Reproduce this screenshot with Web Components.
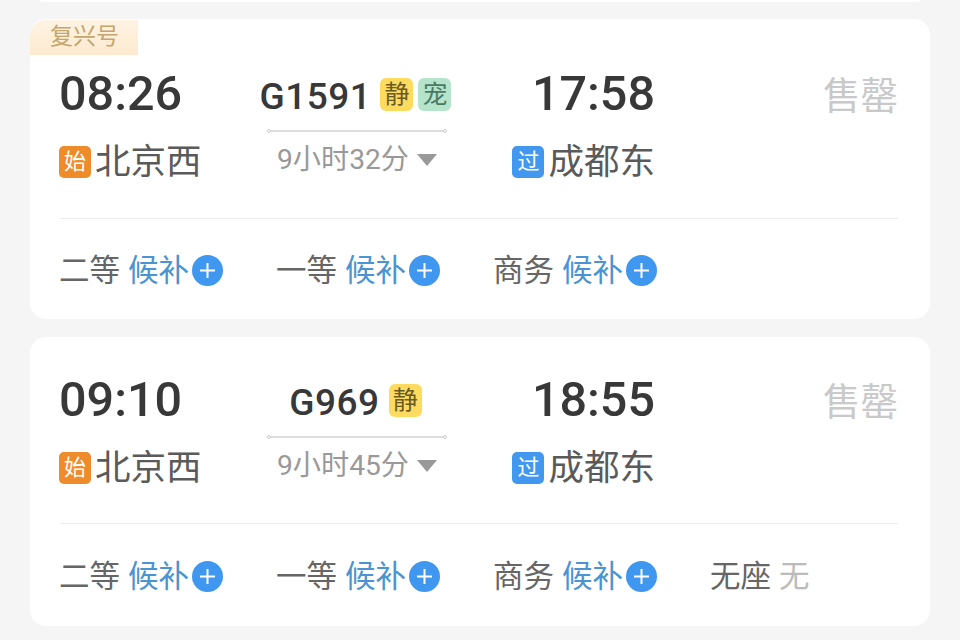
<!DOCTYPE html>
<html lang="zh">
<head>
<meta charset="utf-8">
<title>车次列表</title>
<style>
  html, body { margin: 0; height: 100%; }
  body {
    width: 960px;
    height: 640px;
    overflow: hidden;
    background: #f5f5f5;
    font-family: Roboto, "Noto Sans CJK SC", sans-serif;
  }
  train-list > * { flex: none; }
</style>
</head>
<body>
<train-list>
  <train-card tag="复兴号">
    <span slot="depart">08:26</span>
    <stop-name slot="from" kind="start">北京西</stop-name>
    <span slot="code">G1591</span>
    <train-flag slot="flags" kind="quiet">静</train-flag>
    <train-flag slot="flags" kind="pet">宠</train-flag>
    <span slot="duration">9小时32分</span>
    <span slot="arrive">17:58</span>
    <stop-name slot="to" kind="pass">成都东</stop-name>
    <span slot="status">售罄</span>
    <seat-item slot="seats" name="二等" wait>候补</seat-item>
    <seat-item slot="seats" name="一等" wait>候补</seat-item>
    <seat-item slot="seats" name="商务" wait>候补</seat-item>
  </train-card>
  <train-card>
    <span slot="depart">09:10</span>
    <stop-name slot="from" kind="start">北京西</stop-name>
    <span slot="code">G969</span>
    <train-flag slot="flags" kind="quiet">静</train-flag>
    <span slot="duration">9小时45分</span>
    <span slot="arrive">18:55</span>
    <stop-name slot="to" kind="pass">成都东</stop-name>
    <span slot="status">售罄</span>
    <seat-item slot="seats" name="二等" wait>候补</seat-item>
    <seat-item slot="seats" name="一等" wait>候补</seat-item>
    <seat-item slot="seats" name="商务" wait>候补</seat-item>
    <seat-item slot="seats" name="无座">无</seat-item>
  </train-card>
</train-list>

<script>
class TrainList extends HTMLElement {
  constructor() {
    super();
    this.attachShadow({ mode: "open" });
  }
  connectedCallback() {
    this.shadowRoot.innerHTML = `
      <style>
        :host {
          display: flex;
          flex-direction: column;
          gap: 18px;
          padding: 0 30px;
        }
        .prev {
          height: 2px;
          margin: 0 10px -1px;
          background: #fff;
          border-radius: 0 0 10px 10px;
        }
      </style>
      <div class="prev"></div>
      <slot></slot>
    `;
  }
}

class TrainCard extends HTMLElement {
  constructor() {
    super();
    this.attachShadow({ mode: "open" });
  }
  connectedCallback() {
    const tag = this.getAttribute("tag");
    const tag_html = tag ? `<div class="tag">${tag}</div>` : "";
    this.shadowRoot.innerHTML = `
      <style>
        :host {
          display: block;
          position: relative;
          box-sizing: border-box;
          padding: ${tag ? "47px" : "35px"} 30px 0;
          height: ${tag ? "300px" : "289px"};
          background: #fff;
          border-radius: 16px;
          color: #333;
        }
        .tag {
          position: absolute;
          left: 0;
          top: 1px;
          width: 108px;
          height: 35px;
          padding-left: 20px;
          box-sizing: border-box;
          border-top-left-radius: 16px;
          background: linear-gradient(180deg, #fdf3e3, #fdeacf);
          color: #c4a66f;
          font-size: 23px;
          line-height: 33px;
        }
        .main {
          display: grid;
          grid-template-columns: 180px 234px 180px 1fr;
          grid-template-rows: 56px 56px;
          row-gap: 12px;
          align-items: center;
        }
        .time {
          font-size: 48.5px;
          font-weight: 500;
          line-height: 56px;
          color: #383838;
        }
        .depart { margin-left: -1px; }
        .right { text-align: right; margin-right: -1px; }
        .mid-top {
          display: flex;
          justify-content: center;
          align-items: center;
          gap: 9px;
          margin-right: 3px;
          font-size: 37px;
          font-weight: 500;
          letter-spacing: 0.5px;
          line-height: 56px;
          color: #383838;
        }
        .code { padding-top: 5px; }
        .flags { display: flex; gap: 5px; letter-spacing: 0; }
        .mid-bottom {
          display: flex;
          flex-direction: column;
          align-items: center;
          gap: 0;
          margin-top: -19px;
        }
        .track {
          position: relative;
          width: 178px;
          height: 2px;
          background: #ddd;
          margin-bottom: 12px;
        }
        .track::before, .track::after {
          content: "";
          position: absolute;
          top: -1px;
          width: 4px;
          height: 4px;
          box-sizing: border-box;
          border: 1px solid #ccc;
          border-radius: 50%;
          background: #fff;
        }
        .track::before { left: -1px; }
        .track::after { right: -1px; }
        .duration {
          display: flex;
          align-items: center;
          gap: 8px;
          font-size: 28.2px;
          line-height: 32px;
          color: #999;
          font-weight: 400;
        }
        .tri {
          width: 0;
          height: 0;
          border-left: 10px solid transparent;
          border-right: 10px solid transparent;
          border-top: 12px solid #999;
        }
        .status {
          text-align: right;
          font-size: 37.5px;
          line-height: 56px;
          color: #c9c9c9;
          margin: 4px 2px 0 0;
        }
        .line {
          height: 1px;
          background: #ececec;
          margin-top: ${tag ? "28px" : "27px"};
          margin-right: 2px;
        }
        .seats {
          display: grid;
          grid-template-columns: repeat(4, 217px);
          margin: ${tag ? "33px" : "34px"} 0 0 -1px;
        }
      </style>
      ${tag_html}
      <div class="main">
        <div class="time depart"><slot name="depart"></slot></div>
        <div class="mid-top"><div class="code"><slot name="code"></slot></div><div class="flags"><slot name="flags"></slot></div></div>
        <div class="time right"><slot name="arrive"></slot></div>
        <div class="status"><slot name="status"></slot></div>
        <div class="depart"><slot name="from"></slot></div>
        <div class="mid-bottom">
          <div class="track"></div>
          <div class="duration"><span><slot name="duration"></slot></span><span class="tri"></span></div>
        </div>
        <div class="right"><slot name="to"></slot></div>
        <div></div>
      </div>
      <div class="line"></div>
      <div class="seats"><slot name="seats"></slot></div>
    `;
  }
}

class StopName extends HTMLElement {
  constructor() {
    super();
    this.attachShadow({ mode: "open" });
  }
  connectedCallback() {
    const kind = this.getAttribute("kind");
    const label = kind == "start" ? "始" : "过";
    this.shadowRoot.innerHTML = `
      <style>
        :host {
          display: inline-flex;
          align-items: center;
          gap: 4px;
          font-size: 35.5px;
          line-height: 56px;
          color: #5a5a5a;
          vertical-align: top;
        }
        .badge {
          width: 32px;
          height: 32px;
          border-radius: 5px;
          display: flex;
          align-items: center;
          justify-content: center;
          font-size: 22px;
          line-height: 32px;
          color: #fff;
        }
        .start { background: #ee8b2b; }
        .pass { background: #4297ee; }
      </style>
      <span class="badge ${kind}">${label}</span><slot></slot>
    `;
  }
}

class TrainFlag extends HTMLElement {
  constructor() {
    super();
    this.attachShadow({ mode: "open" });
  }
  connectedCallback() {
    const kind = this.getAttribute("kind");
    this.shadowRoot.innerHTML = `
      <style>
        :host {
          display: flex;
          align-items: center;
          justify-content: center;
          width: 33px;
          height: 33px;
          border-radius: 6px;
          font-size: 25px;
          font-weight: 400;
          line-height: 33px;
        }
        :host([kind="quiet"]) { background: #fddb5e; color: #6b5a22; }
        :host([kind="pet"]) { background: #b4e4cc; color: #4a7a63; }
      </style>
      <slot></slot>
    `;
  }
}

class SeatItem extends HTMLElement {
  constructor() {
    super();
    this.attachShadow({ mode: "open" });
  }
  connectedCallback() {
    const name = this.getAttribute("name");
    const wait = this.hasAttribute("wait");
    const plus = wait ? `<svg width="31" height="31" viewBox="0 0 31 31"><circle cx="15.5" cy="15.5" r="15.5" fill="#3f97ef"/><path d="M15.5 8v15M8 15.5h15" stroke="#fff" stroke-width="2" fill="none"/></svg>` : "";
    this.shadowRoot.innerHTML = `
      <style>
        :host {
          display: flex;
          align-items: center;
          height: 36px;
          font-size: 30.5px;
          line-height: 36px;
          color: #666;
        }
        span { padding-top: 2px; }
        .val { margin-left: 8px; color: ${wait ? "#4b94d2" : "#bbb"}; }
        svg { margin-left: 3px; flex: none; }
      </style>
      <span>${name}</span><span class="val"><slot></slot></span>${plus}
    `;
  }
}

window.customElements.define("train-list", TrainList);
window.customElements.define("train-card", TrainCard);
window.customElements.define("stop-name", StopName);
window.customElements.define("train-flag", TrainFlag);
window.customElements.define("seat-item", SeatItem);
</script>
</body>
</html>
